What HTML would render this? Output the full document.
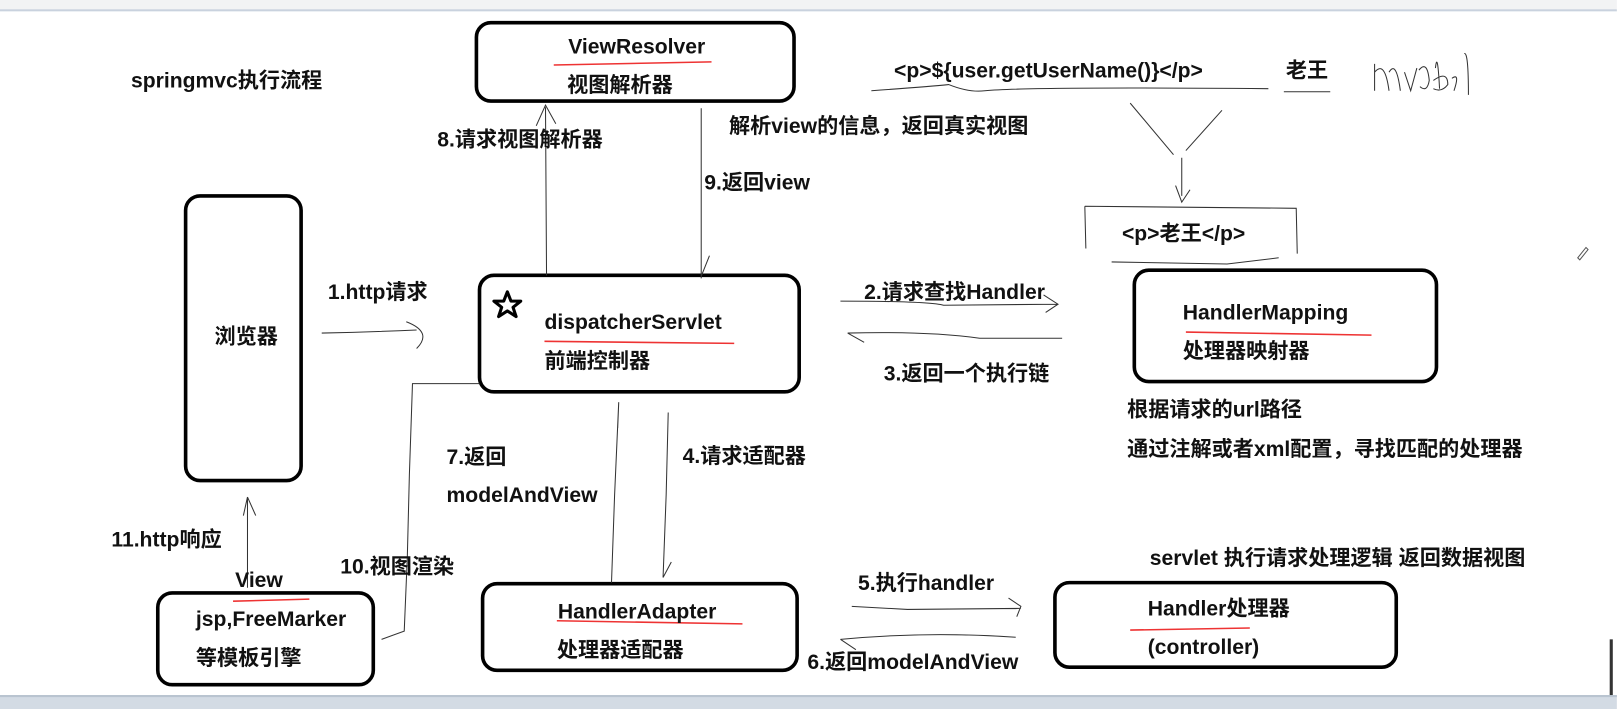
<!DOCTYPE html>
<html><head><meta charset="utf-8"><style>
html,body{margin:0;padding:0;background:#fff;overflow:hidden;width:1617px;height:709px}
#w{transform:scale(1.0312);transform-origin:0 0;width:1568px;height:688px;position:relative}
svg text{font-family:"Liberation Sans","Noto Sans CJK SC",sans-serif;font-weight:bold;font-size:20.5px;fill:#111}
</style></head><body><div id="w">
<svg width="1568" height="688" viewBox="0 0 1568 688" xmlns="http://www.w3.org/2000/svg">
<rect x="0" y="0" width="1568" height="9" fill="#f2f3f4"/>
<rect x="0" y="9" width="1568" height="2" fill="#c9d2de"/>

<g fill="none" stroke="#000" stroke-width="3.5">
<rect x="462" y="22" width="308" height="76" rx="14"/>
<rect x="180" y="190" width="112" height="276" rx="14"/>
<rect x="465" y="267" width="310" height="113" rx="14"/>
<rect x="1100" y="262" width="293" height="108" rx="14"/>
<rect x="153" y="575" width="209" height="89" rx="14"/>
<rect x="468" y="566" width="305" height="84" rx="14"/>
<rect x="1023" y="565" width="331" height="82" rx="14"/>
</g>

<g fill="none" stroke="#333" stroke-width="1">
<path d="M1052 200 L1257 202 L1258 246 M1052 200 L1053 241 M1078 254 L1190 256 L1240 250"/>
<path d="M845 88 Q900 84 920 82 Q940 90 955 88 Q1000 84 1230 86 M1245 89 L1290 89"/>
<path d="M1096 100 L1138 150 M1185 107 L1150 146 M1146 153 L1146 190 M1140 180 L1146 196 L1154 184"/>
<path d="M1333 88 L1333 62 M1333 70 Q1343 58 1347 88 M1347 70 Q1354 58 1358 88 M1362 70 L1368 88 L1374 66 M1376 68 Q1384 58 1386 78 Q1384 90 1377 84 M1392 66 Q1394 48 1396 86 M1390 78 Q1404 68 1404 82 Q1398 90 1390 86 M1408 76 Q1416 70 1410 88 M1420 52 Q1424 50 1424 92"/>
<path d="M530 267 L529 104 M520 122 L529 102 L539 120"/>
<path d="M680 105 L680 270 M688 248 L680 268"/>
<path d="M312 323 Q360 322 404 320 M394 312 Q420 322 404 338"/>
<path d="M815 292 Q900 292 915 296 L1025 295 M1012 286 L1026 295 L1014 303"/>
<path d="M822 323 Q900 321 950 328 L1030 328 M822 323 L838 332"/>
<path d="M465 372 L400 372 L397 460 L395 540 L392 612 L370 620"/>
<path d="M600 390 L596 480 L593 565 M600 390 L599 415"/>
<path d="M648 400 L646 480 L643 560 M651 545 L643 560"/>
<path d="M240 570 L240 482 M240 482 L236 500 M240 482 L248 500"/>
<path d="M826 588 L880 591 L990 590 M978 580 L990 588 L986 598"/>
<path d="M815 620 Q900 612 985 618 M815 620 L830 630"/>
</g>
<path d="M492 283 L495.5 292 L505 292 L497.5 298 L500.5 307 L492 301.5 L483.5 307 L486.5 298 L479 292 L488.5 292 Z" fill="none" stroke="#000" stroke-width="3" stroke-linejoin="round"/>
<path d="M1530 250 L1538 240 L1540 242 L1532 252 Z" fill="none" stroke="#555" stroke-width="1"/>

<g fill="none" stroke="#e33" stroke-width="1.5">
<path d="M537 63 L690 60"/>
<path d="M528 331 L712 333"/>
<path d="M1150 322 L1330 325"/>
<path d="M540 602 L720 605"/>
<path d="M226 583 L300 581"/>
<path d="M1096 611 L1212 609"/>
</g>
<rect x="0" y="674" width="1568" height="14" fill="#d3dbe4"/>
<rect x="0" y="674" width="1568" height="2" fill="#b9c4d0"/>
<rect x="1561" y="620" width="3" height="54" fill="#333"/>

<text x="127" y="85">springmvc执行流程</text>
<text x="551" y="52">ViewResolver</text>
<text x="550" y="89">视图解析器</text>
<text x="424" y="142">8.请求视图解析器</text>
<text x="707" y="129">解析view的信息，返回真实视图</text>
<text x="683" y="184">9.返回view</text>
<text x="867" y="75">&lt;p&gt;${user.getUserName()}&lt;/p&gt;</text>
<text x="1247" y="75">老王</text>
<text x="1088" y="233">&lt;p&gt;老王&lt;/p&gt;</text>
<text x="318" y="290">1.http请求</text>
<text x="208" y="333">浏览器</text>
<text x="528" y="319">dispatcherServlet</text>
<text x="528" y="357">前端控制器</text>
<text x="838" y="290">2.请求查找Handler</text>
<text x="857" y="369">3.返回一个执行链</text>
<text x="1147" y="310">HandlerMapping</text>
<text x="1147" y="347">处理器映射器</text>
<text x="1093" y="404">根据请求的url路径</text>
<text x="1093" y="442">通过注解或者xml配置，寻找匹配的处理器</text>
<text x="433" y="450">7.返回</text>
<text x="433" y="487">modelAndView</text>
<text x="662" y="449">4.请求适配器</text>
<text x="108" y="530">11.http响应</text>
<text x="330" y="556">10.视图渲染</text>
<text x="228" y="569">View</text>
<text x="190" y="607">jsp,FreeMarker</text>
<text x="190" y="645">等模板引擎</text>
<text x="1115" y="548">servlet 执行请求处理逻辑 返回数据视图</text>
<text x="832" y="572">5.执行handler</text>
<text x="541" y="600">HandlerAdapter</text>
<text x="540" y="637">处理器适配器</text>
<text x="1113" y="597">Handler处理器</text>
<text x="1113" y="634">(controller)</text>
<text x="783" y="649">6.返回modelAndView</text>
</svg></div></body></html>
